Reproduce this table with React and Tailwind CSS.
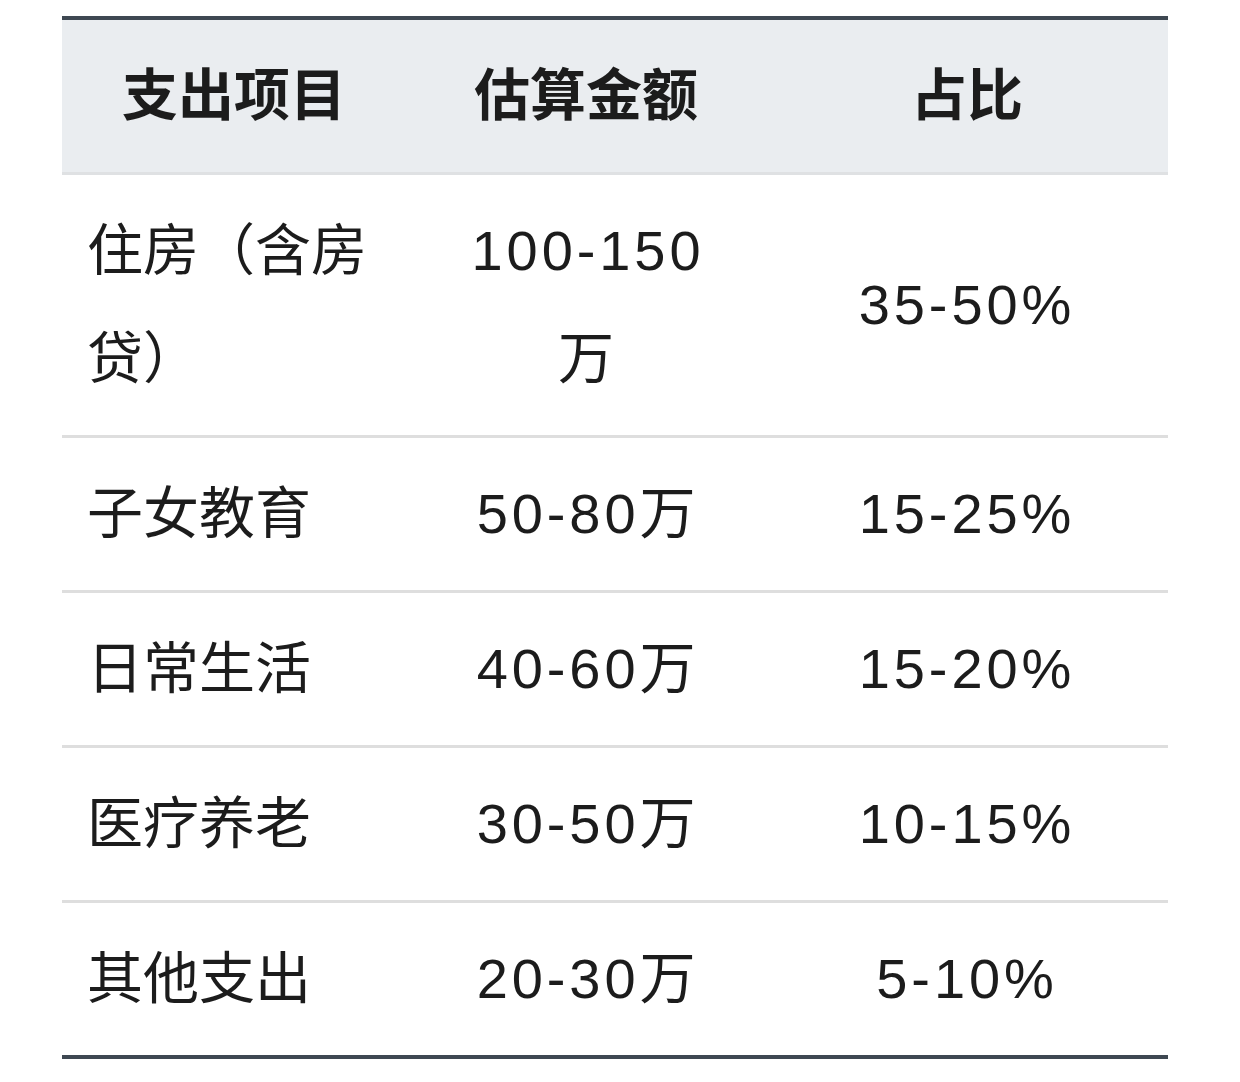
import React from "react";

const ROWS = [
  { item: "住房（含房贷）", amount: ["100-150", "万"], ratio: "35-50%" },
  { item: "子女教育", amount: ["50-80万"], ratio: "15-25%" },
  { item: "日常生活", amount: ["40-60万"], ratio: "15-20%" },
  { item: "医疗养老", amount: ["30-50万"], ratio: "10-15%" },
  { item: "其他支出", amount: ["20-30万"], ratio: "5-10%" },
];

const COLS = "grid grid-cols-[344px_360px_402px]";

export default function App() {
  return (
    <div className="min-h-[1082px] bg-white pt-[16px] font-['Liberation_Sans','Noto_Sans_CJK_SC',sans-serif] text-[#1c1c1c]">
      <div className="ml-[62px] w-[1106px] border-y-4 border-[#3e4852]">
        <div className={`${COLS} border-b-[3px] border-[#dfe1e3] bg-[#eaedf0] text-[56px] font-bold leading-[108px]`}>
          <div className="px-[26px] py-[22px] text-center">支出项目</div>
          <div className="px-[26px] py-[22px] text-center">估算金额</div>
          <div className="px-[26px] py-[22px] text-center">占比</div>
        </div>
        {ROWS.map((r, i) => (
          <div
            key={r.item}
            className={`${COLS} items-center text-[56px] leading-[108px] ${i < ROWS.length - 1 ? "border-b-[3px] border-[#dedede]" : ""}`}
          >
            <div className="py-[22px] pl-[25px] pr-[26px]">{r.item}</div>
            <div className="py-[22px] pl-[30px] pr-[26px] text-center tracking-[0.07em]">
              {r.amount.map((a) => (
                <div key={a}>{a}</div>
              ))}
            </div>
            <div className="py-[22px] pl-[26px] pr-[26px] text-center tracking-[0.07em]">{r.ratio}</div>
          </div>
        ))}
      </div>
    </div>
  );
}
